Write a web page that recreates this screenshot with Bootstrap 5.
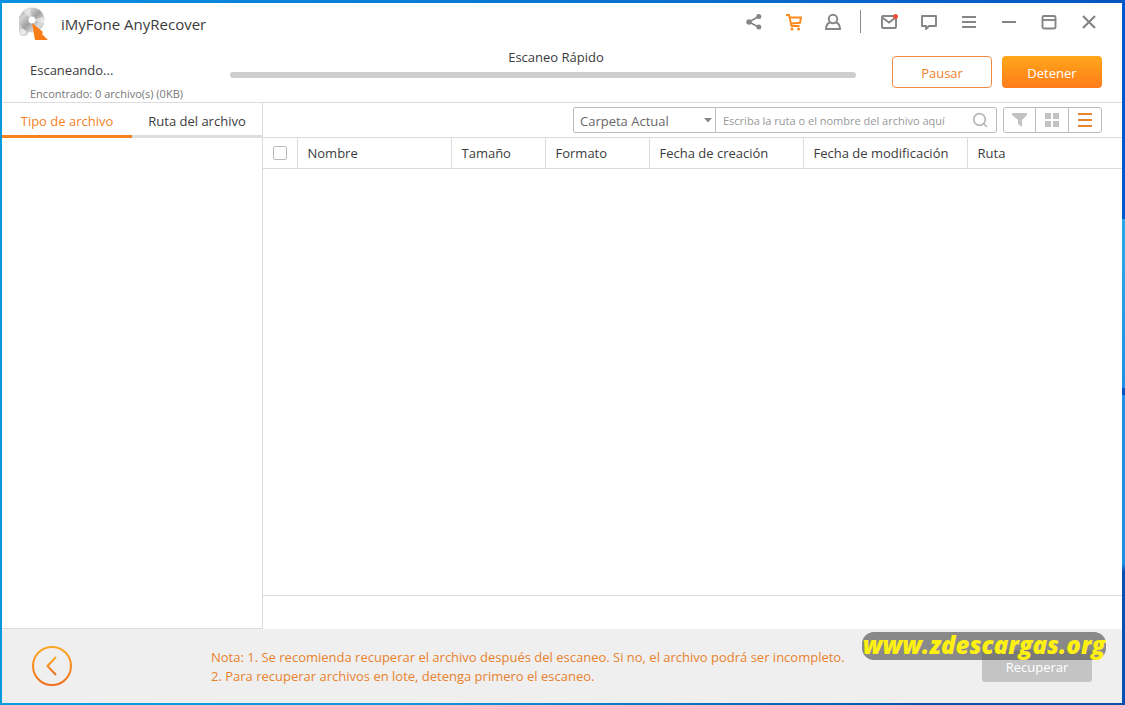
<!DOCTYPE html>
<html lang="es">
<head>
<meta charset="utf-8">
<meta name="viewport" content="width=device-width, initial-scale=1">
<title>iMyFone AnyRecover</title>
<link rel="stylesheet" href="https://cdn.jsdelivr.net/npm/bootstrap@5.3.0/dist/css/bootstrap.min.css">
<style>
  :root { --orange: #f5821f; --line: #dcdcdc; --ink: #3c3c3c; }
  body {
    font-family: "Open Sans", "Noto Sans", sans-serif;
    font-size: 13px; line-height: 20px; color: var(--ink);
    padding: 3px 3px 2px 2px;
    background:
      linear-gradient(#0058d0 0 31%, #27a8e8 31% 35%, #1e90e6 55%, #0a52c0 55% 56%, #1e90e8 56% 80%, #0a50b4 81%) right / 3px 100% no-repeat,
      linear-gradient(90deg, #0a9be0, #1098dc 35%, #0a50a8 85%) bottom / 100% 2px no-repeat,
      linear-gradient(90deg, #0a90e0, #0a70cc 60%, #0554c0) top / 100% 3px no-repeat,
      #0598dc;
  }
  button { font: inherit; color: inherit; }
  .bare { background: none; border: 0; padding: 0; }
  .titlebar { height: 39px; padding: 0 13px 2px 13px; }
  .app-name { font-size: 15px; }
  .tool { width: 40px; height: 24px; color: #858585; }
  .tool-narrow { width: 38px; }
  .tool svg, .view svg { display: block; margin: auto; }
  .divider { width: 1px; height: 23px; background: #8c8c8c; margin: 0 8px; }
  .status { height: 61px; padding: 0 20px 0 28px; border-bottom: 1px solid var(--line); }
  .found { font-size: 11px; color: #777; }
  .scan-info { width: 200px; padding-top: 18px; }
  .scan-bar { padding-top: 5px; margin-right: 36px; }
  .scan-label { padding-left: 26px; }
  .progress { height: 6px; border-radius: 3px; background: #cecece; margin-top: 5px; }
  .actions { gap: 10px; }
  .action { width: 100px; height: 32px; border-radius: 4px; border: 1px solid #ee8a45; color: #ee7f2d; background: #fff; padding: 2px 0 0; }
  .action-main { border: 0; color: #fff; background: linear-gradient(#ffa71a, #ff7b1a); }
  .side { width: 261px; border-right: 1px solid var(--line); border-bottom: 1px solid var(--line); }
  .tab { height: 35px; border: 0; border-bottom: 3px solid #dedede; background: none; padding: 4px 0 0; }
  .tab.on { color: var(--orange); border-color: var(--orange); }
  .filters { height: 35px; padding: 0 20px 0 0; border-bottom: 1px solid var(--line); }
  .folder { width: 143px; height: 26px; border: 1px solid #bdbdbd; border-radius: 2px 0 0 2px; padding: 2px 6px 0; color: #666; appearance: none; background: #fff; }
  .folder-wrap { position: relative; }
  .folder-wrap svg { position: absolute; right: 4px; top: 11px; pointer-events: none; }
  .search { width: 281px; height: 26px; border: 1px solid #bdbdbd; border-left: 0; border-radius: 0 3px 3px 0; padding: 0 8px 0 7px; }
  .search input { border: 0; outline: 0; font-size: 11px; color: #777; min-width: 0; padding: 2px 0 0; background: none; }
  .search input::placeholder { color: #999; opacity: 1; }
  .views { height: 26px; border: 1px solid #bdbdbd; border-radius: 3px; margin-left: 6px; }
  .view { width: 33px; color: #c2c2c2; }
  .view + .view { border-left: 1px solid #bdbdbd; }
  .view:first-child { width: 31px; }
  .files { table-layout: fixed; width: 100%; }
  .files th { height: 30px; font-weight: 400; padding: 0 0 0 10px; border-bottom: 1px solid var(--line); white-space: nowrap; }
  .files th + th { border-left: 1px solid var(--line); }
  .form-check-input { width: 14px; height: 14px; margin: 0; border-color: #bbb; display: block; }
  .form-check-input[type=checkbox] { border-radius: 2px; }
  .summary { height: 34px; border-top: 1px solid var(--line); }
  .bottom { height: 74px; background: #efefef; padding: 0 30px; }
  .note { color: #e8822e; line-height: 19px; margin-left: 139px; padding-top: 2px; white-space: nowrap; }
  .recover { width: 110px; height: 32px; border: 0; border-radius: 3px; background: #c4c4c4; color: #fff; display: block; padding: 2px 0 0; }
  .recover-wrap { position: relative; }
  .site { position: absolute; right: -14px; bottom: 22px; width: 244px; height: 28px; border-radius: 12px; background: rgba(75,75,75,.62);
    color: #fff014; font-size: 24px; line-height: 26px; font-weight: 800; font-style: italic; text-align: center; white-space: nowrap; }
  .site:hover { color: #fff014; }
</style>
</head>
<body class="min-vh-100 d-flex flex-column">
<div class="bg-white d-flex flex-column flex-fill">
  <header class="titlebar d-flex align-items-center">
    <svg width="34" height="36" viewBox="0 0 34 36" aria-hidden="true">
      <defs>
        <linearGradient id="disc" x1="0" y1="0" x2="1" y2="1"><stop offset="0" stop-color="#8a8a8a"/><stop offset=".25" stop-color="#d4d4d4"/><stop offset=".5" stop-color="#a0a0a0"/><stop offset=".75" stop-color="#ddd"/><stop offset="1" stop-color="#a8a8a8"/></linearGradient>
        <linearGradient id="warm" x1="0" y1="0" x2="0" y2="1"><stop offset="0" stop-color="#f9a825"/><stop offset="1" stop-color="#f07020"/></linearGradient>
      </defs>
      <path d="M4 11V27Q4 32 9 32Q13 32 14 26Z" fill="#cfcfcf"/>
      <circle cx="8" cy="28" r="3" fill="#e9e9e9"/>
      <circle cx="17" cy="16" r="12.500" fill="url(#disc)"/>
      <path d="M17 16L8 7A12.500 12.500 0 0 1 15 4ZM17 16L28 13A12 12 0 0 1 29 19Z" fill="#fff" opacity=".45"/>
      <circle cx="17" cy="16" r="3.500" fill="#fff"/>
      <path d="M17 19L28 28L27 30L33 36H20Z" fill="#fa7c16"/>
    </svg>
    <span class="app-name ms-2 ps-1 mt-1">iMyFone AnyRecover</span>
    <div class="d-flex align-items-center ms-auto">
      <button class="bare tool" aria-label="Compartir"><svg width="18" height="18" viewBox="0 0 18 18"><path d="M13.500 3.500L4 9L13.500 14" fill="none" stroke="currentColor" stroke-width="1.700"/><g fill="currentColor"><circle cx="13.800" cy="3.500" r="2.500"/><circle cx="4" cy="9" r="2.700"/><circle cx="13.800" cy="14" r="2.500"/></g></svg></button>
      <button class="bare tool" aria-label="Comprar"><svg width="18" height="18" viewBox="0 0 18 18" fill="none" stroke="#ff8a1c" stroke-width="1.900"><path d="M1 2H4L6.500 13H14.500M5 4.500H16L15 9.800L6.500 10.500"/><g fill="#ff8a1c" stroke="none"><circle cx="7" cy="16" r="1.500"/><circle cx="13.500" cy="16" r="1.500"/></g></svg></button>
      <button class="bare tool tool-narrow" aria-label="Cuenta"><svg width="18" height="18" viewBox="0 0 18 18" fill="none" stroke="currentColor" stroke-width="1.900"><circle cx="9" cy="6" r="4.200"/><path d="M5.800 9.500Q2 11 2 16H16Q16 11 12.200 9.500"/></svg></button>
      <span class="divider"></span>
      <button class="bare tool" aria-label="Correo"><svg width="18" height="18" viewBox="0 0 18 18" fill="none" stroke="currentColor" stroke-width="1.900"><rect x="2" y="3" width="14" height="12" rx="1"/><path d="M3 5L9 9.500L15 5"/><circle cx="15.500" cy="3.500" r="2.500" fill="#e8503c" stroke="none"/></svg></button>
      <button class="bare tool" aria-label="Comentarios"><svg width="18" height="18" viewBox="0 0 18 18" fill="none" stroke="currentColor" stroke-width="1.900"><path d="M2 3H16V13H9L6 16V13H2Z" stroke-linejoin="round"/></svg></button>
      <button class="bare tool" aria-label="Menú"><svg width="18" height="18" viewBox="0 0 18 18" stroke="currentColor" stroke-width="2"><path d="M2 4H16M2 9H16M2 14H16"/></svg></button>
      <button class="bare tool" aria-label="Minimizar"><svg width="18" height="18" viewBox="0 0 18 18" stroke="currentColor" stroke-width="2"><path d="M2 9H16"/></svg></button>
      <button class="bare tool" aria-label="Maximizar"><svg width="18" height="18" viewBox="0 0 18 18" fill="none" stroke="currentColor" stroke-width="1.900"><rect x="2.500" y="3" width="13" height="12.500" rx="1.500"/><path d="M2.500 7H15.500"/></svg></button>
      <button class="bare tool" aria-label="Cerrar"><svg width="18" height="18" viewBox="0 0 18 18" stroke="currentColor" stroke-width="2.200"><path d="M3 3L15 15M15 3L3 15"/></svg></button>
    </div>
  </header>

  <section class="status d-flex">
    <div class="scan-info">
      <div>Escaneando...</div>
      <div class="found mt-1">Encontrado: 0 archivo(s) (0KB)</div>
    </div>
    <div class="scan-bar flex-fill text-center">
      <div class="scan-label">Escaneo Rápido</div>
      <div class="progress" role="progressbar" aria-label="Escaneo Rápido" aria-valuenow="0" aria-valuemin="0" aria-valuemax="100"></div>
    </div>
    <div class="actions d-flex align-items-center">
      <button class="action">Pausar</button>
      <button class="action action-main">Detener</button>
    </div>
  </section>

  <main class="d-flex flex-fill">
    <aside class="side flex-shrink-0">
      <div class="d-flex">
        <button class="tab on w-50">Tipo de archivo</button>
        <button class="tab w-50">Ruta del archivo</button>
      </div>
    </aside>
    <section class="flex-fill d-flex flex-column">
      <div class="filters d-flex align-items-center justify-content-end">
        <div class="folder-wrap">
          <select class="folder d-block" aria-label="Carpeta"><option>Carpeta Actual</option></select>
          <svg width="8" height="5" viewBox="0 0 8 5"><path d="M0 0H8L4 4.500Z" fill="#888"/></svg>
        </div>
        <div class="search d-flex align-items-center">
          <input class="flex-fill" type="text" aria-label="Buscar" placeholder="Escriba la ruta o el nombre del archivo aquí">
          <button class="bare" aria-label="Buscar"><svg class="d-block" width="16" height="16" viewBox="0 0 16 16" fill="none" stroke="#b8b8b8" stroke-width="1.700"><circle cx="7.500" cy="7.500" r="5.800"/><path d="M11.500 11.500L15 15"/></svg></button>
        </div>
        <div class="views d-flex">
          <button class="bare view" aria-label="Filtrar"><svg width="16" height="16" viewBox="0 0 16 16" fill="currentColor"><path d="M0 1H15V3L10 8V15L6 12V8L0 3Z"/></svg></button>
          <button class="bare view" aria-label="Cuadrícula"><svg width="14" height="14" viewBox="0 0 14 14" fill="currentColor"><path d="M0 0H6V6H0ZM8 0H14V6H8ZM0 8H6V14H0ZM8 8H14V14H8Z"/></svg></button>
          <button class="bare view" aria-label="Lista"><svg width="14" height="14" viewBox="0 0 14 14" fill="#e8822e"><path d="M0 0H14V2H0ZM0 6H14V8H0ZM0 12H14V14H0Z"/></svg></button>
        </div>
      </div>
      <table class="files">
        <colgroup><col style="width:34px"><col style="width:154px"><col style="width:94px"><col style="width:104px"><col style="width:154px"><col style="width:164px"><col></colgroup>
        <thead><tr>
          <th><input class="form-check-input" type="checkbox" aria-label="Seleccionar todo"></th>
          <th>Nombre</th><th>Tamaño</th><th>Formato</th><th>Fecha de creación</th><th>Fecha de modificación</th><th>Ruta</th>
        </tr></thead>
      </table>
      <div class="summary mt-auto"></div>
    </section>
  </main>

  <footer class="bottom d-flex align-items-center">
    <button class="bare" aria-label="Atrás"><svg class="d-block" width="40" height="40" viewBox="0 0 40 40" fill="none" stroke="url(#warm)" stroke-width="2"><circle cx="20" cy="20" r="19"/><path d="M24 11L15.500 20L24 29"/></svg></button>
    <div class="note">Nota: 1. Se recomienda recuperar el archivo después del escaneo. Si no, el archivo podrá ser incompleto.<br>2. Para recuperar archivos en lote, detenga primero el escaneo.</div>
    <div class="recover-wrap ms-auto">
      <button class="recover">Recuperar</button>
      <a class="site text-decoration-none" href="#">www.zdescargas.org</a>
    </div>
  </footer>
</div>
<script src="https://cdn.jsdelivr.net/npm/bootstrap@5.3.0/dist/js/bootstrap.bundle.min.js"></script>
</body>
</html>
